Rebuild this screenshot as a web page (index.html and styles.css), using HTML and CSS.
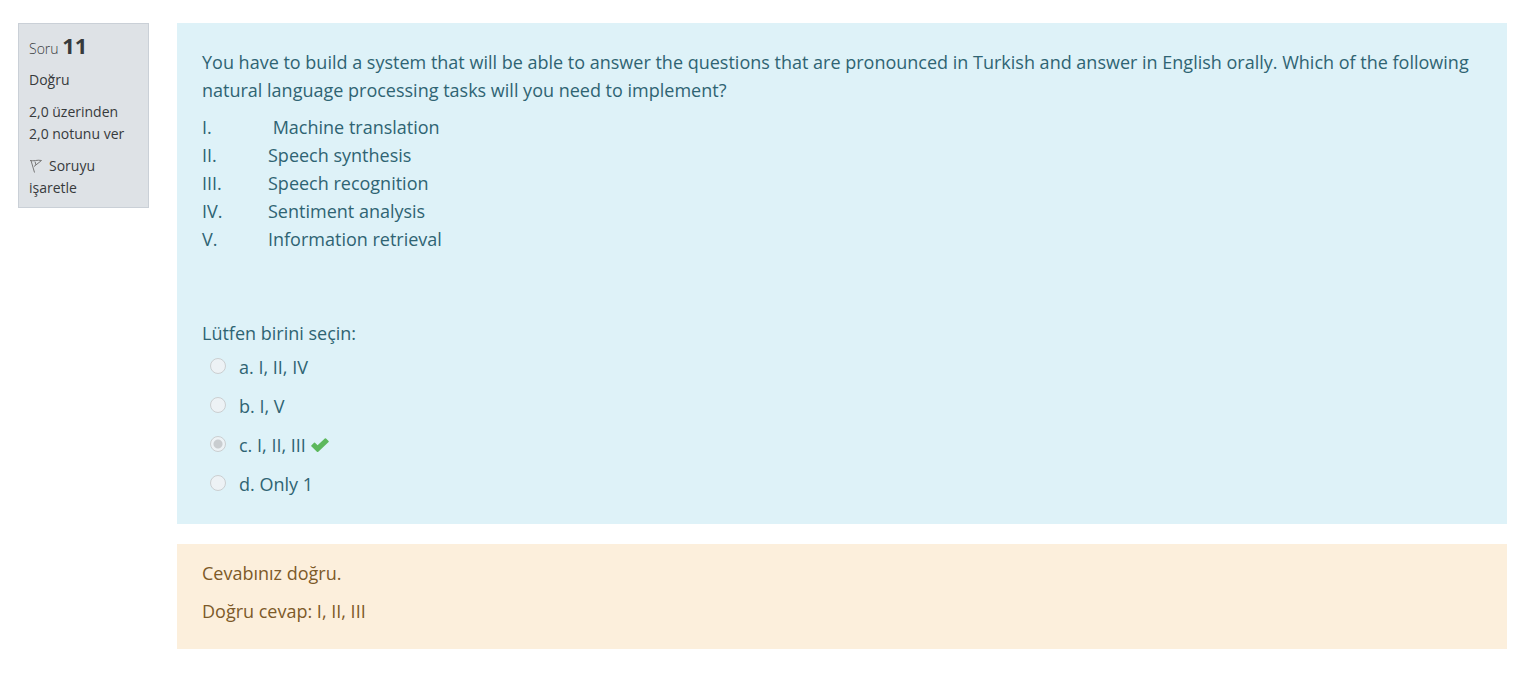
FILE: index.html
```html
<!DOCTYPE html>
<html lang="tr">
<head>
<meta charset="utf-8">
<title>Soru 11</title>
<link rel="stylesheet" href="styles.css">
</head>
<body>
<main class="question">
  <aside class="info">
    <h3 class="number">Soru <span class="qno">11</span></h3>
    <div class="state">Doğru</div>
    <div class="grade">2,0 üzerinden 2,0 notunu ver</div>
    <div class="flag"><svg class="flag-icon" viewBox="0 0 14 16" aria-hidden="true"><path d="M2 2.500 5.500 14.500M1 2.500C5 3.500 8 1.500 12.500 2.500L5 8.500M6 3.500 7 7"/></svg>Soruyu işaretle</div>
  </aside>
  <div class="content">
    <section class="formulation">
      <p class="text" lang="en">You have to build a system that will be able to answer the questions that are pronounced in Turkish and answer in English orally. Which of the following natural language processing tasks will you need to implement?</p>
      <div class="tasks" lang="en">
        <div class="task"><span class="numeral">I.</span><span>&nbsp;Machine translation</span></div>
        <div class="task"><span class="numeral">II.</span><span>Speech synthesis</span></div>
        <div class="task"><span class="numeral">III.</span><span>Speech recognition</span></div>
        <div class="task"><span class="numeral">IV.</span><span>Sentiment analysis</span></div>
        <div class="task"><span class="numeral">V.</span><span>Information retrieval</span></div>
      </div>
      <fieldset class="answers">
        <legend class="prompt">Lütfen birini seçin:</legend>
        <div class="answer"><input class="radio" type="radio" name="answer" id="a" disabled><label for="a">a. I, II, IV</label></div>
        <div class="answer"><input class="radio" type="radio" name="answer" id="b" disabled><label for="b">b. I, V</label></div>
        <div class="answer"><input class="radio" type="radio" name="answer" id="c" checked disabled><label for="c">c. I, II, III</label><svg class="check" viewBox="0 0 18 14" aria-hidden="true"><path d="M0.300 7.500 3 4.800Q3.500 4.300 4 4.800L6.600 7.300 13.800 0.400Q14.500 0 15 0.400L17.600 3Q18 3.500 17.600 4L7.300 13.700Q6.600 14.200 5.900 13.700L0.300 8.300Q0 7.900 0.300 7.500Z"/></svg></div>
        <div class="answer"><input class="radio" type="radio" name="answer" id="d" disabled><label for="d">d. Only 1</label></div>
      </fieldset>
    </section>
    <section class="outcome">
      <p class="feedback">Cevabınız doğru.</p>
      <p class="feedback">Doğru cevap: I, II, III</p>
    </section>
  </div>
</main>
</body>
</html>
```
FILE: styles.css
```css
* { box-sizing: border-box; }
body {
  margin: 0;
  background: #fff;
  font: 18px/28px "Segoe UI", "Open Sans", sans-serif;
}
.question {
  display: flex;
  align-items: flex-start;
  gap: 28px;
  padding: 23px 17px 24px 18px;
}
.info {
  flex: 0 0 131px;
  padding: 8px 10px;
  border: 1px solid #cad0d7;
  background: #dee2e6;
  color: #373a3c;
  font-size: 14px;
  line-height: 22px;
}
.number {
  margin: 0;
  font-size: 14px;
  font-weight: 300;
  line-height: 26px;
}
.qno { font-size: 22px; font-weight: 700; }
.state { margin-top: 7px; }
.grade { margin-top: 10px; }
.flag { margin-top: 10px; }
.flag-icon {
  width: 14px;
  height: 16px;
  margin-right: 6px;
  vertical-align: -3px;
  fill: none;
  stroke: #777;
  stroke-width: 1;
}
.content { flex: 1; min-width: 0; }
.formulation {
  padding: 25px;
  padding-bottom: 21px;
  background: #def2f8;
  color: #2f6473;
}
.text { margin: 0 0 9px; }
.task { display: flex; }
.numeral { flex: 0 0 66px; }
.answers { margin: 66px 0 0; padding: 0; border: 0; }
.prompt { padding: 0; }
.answer {
  display: flex;
  align-items: center;
  height: 39px;
  padding-left: 8px;
}
.radio {
  appearance: none;
  width: 16px;
  height: 16px;
  margin: 0 13px 2px 0;
  border: 1px solid #cbcfd1;
  border-radius: 50%;
  background: #edf2f5;
}
.radio:checked {
  background: radial-gradient(circle, #c9cdd0 4px, #edf2f5 5px);
}
.check {
  width: 18px;
  height: 14px;
  margin-left: 5px;
  fill: #5cb85c;
}
.outcome {
  margin-top: 20px;
  padding: 15px 25px 24px;
  background: #fcefdc;
  color: #7d5a29;
}
.feedback { margin: 0; }
.feedback + .feedback { margin-top: 10px; }
```
